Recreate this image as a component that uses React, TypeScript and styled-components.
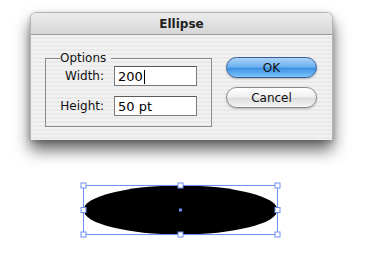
import React from "react";
import styled, { createGlobalStyle } from "styled-components";

const Global = createGlobalStyle`
    html, body {
        margin: 0;
        padding: 0;
        background: #ffffff;
    }
    body {
        font-family: "DejaVu Sans", "Liberation Sans", sans-serif;
        width: 366px;
        height: 276px;
        overflow: hidden;
    }
`;

const Page = styled.div`
    display: flex;
    flex-direction: column;
    padding: 12px 0 0 30px;
`;

const Window = styled.div`
    width: 303px;
    height: 128px;
    display: flex;
    flex-direction: column;
    border-radius: 6px 6px 0 0;
    border: 1px solid #b4b4b4;
    border-bottom: none;
    box-sizing: border-box;
    box-shadow: 0 10px 16px rgba(0, 0, 0, 0.6), 0 2px 5px rgba(0, 0, 0, 0.2);
    overflow: hidden;
`;

const TitleBar = styled.div`
    height: 21px;
    flex: none;
    display: flex;
    align-items: center;
    justify-content: center;
    background: linear-gradient(#ececec, #d6d6d6);
    border-bottom: 1px solid #9a9a9a;
    font-size: 12px;
    font-weight: bold;
    color: #222;
`;

const Body = styled.div`
    flex: 1;
    display: flex;
    gap: 14px;
    padding: 16px 0 0 14px;
    background: repeating-linear-gradient(#f2f2f2 0 2px, #e9e9e9 2px 4px);
`;

const Group = styled.fieldset`
    margin: 0;
    width: 167px;
    height: 76px;
    box-sizing: border-box;
    border: 1px solid #8c8c8c;
    padding: 1px 0 0 14px;
    display: grid;
    grid-template-columns: 44px 83px;
    grid-auto-rows: 20px;
    column-gap: 10px;
    row-gap: 10px;
    align-content: start;
`;

const Legend = styled.legend`
    margin-left: 0;
    padding: 0 5px 0 0;
    font-size: 12px;
    color: #111;
`;

const Label = styled.label`
    font-size: 12px;
    color: #111;
    text-align: right;
    align-self: center;
    white-space: nowrap;
`;

const Field = styled.div`
    box-sizing: border-box;
    border: 1px solid #7a7a7a;
    border-top-color: #5a5a5a;
    background: #fff;
    font-size: 13px;
    color: #000;
    padding: 1px 0 0 3px;
    display: flex;
    align-items: center;
`;

const Caret = styled.span`
    display: inline-block;
    width: 1px;
    height: 14px;
    background: #000;
    margin-left: 1px;
`;

const Buttons = styled.div`
    display: flex;
    flex-direction: column;
    gap: 9px;
    padding-top: 6px;
`;

const Button = styled.div<{ $primary?: boolean }>`
    width: 91px;
    height: 21px;
    box-sizing: border-box;
    border-radius: 11px;
    display: flex;
    align-items: center;
    justify-content: center;
    font-size: 12px;
    color: #111;
    border: 1px solid ${(p) => (p.$primary ? "#3a5f98" : "#8a8a8a")};
    background: ${(p) =>
        p.$primary
            ? "linear-gradient(#a9d3f7 0%, #6fb2ef 45%, #3d92e6 55%, #7cc4fb 100%)"
            : "linear-gradient(#ffffff 0%, #f0f0f0 45%, #dcdcdc 55%, #f6f6f6 100%)"};
    box-shadow: 0 1px 2px rgba(0, 0, 0, 0.25);
`;

const Canvas = styled.div`
    display: flex;
    padding: 42px 0 0 50px;
`;

const blue = "#6f8ff5";

const Handle: React.FC<{ x: number; y: number }> = ({ x, y }) => (
    <rect x={x - 2.5} y={y - 2.5} width={5} height={5} fill="#fff" stroke={blue} strokeWidth={1} />
);

const Selection: React.FC = () => {
    const l = 3.5, r = 197.5, t = 3.5, b = 52.5;
    const cx = (l + r) / 2, cy = (t + b) / 2;
    return (
        <svg width={202} height={57} viewBox="0 0 202 57">
            <ellipse cx={cx} cy={cy} rx={(r - l) / 2} ry={(b - t) / 2} fill="#000" />
            <rect x={l} y={t} width={r - l} height={b - t} fill="none" stroke={blue} strokeWidth={1} />
            {[l, cx, r].map((x) => (
                <React.Fragment key={x}>
                    <Handle x={x} y={t} />
                    <Handle x={x} y={b} />
                </React.Fragment>
            ))}
            <Handle x={l} y={cy} />
            <Handle x={r} y={cy} />
            <rect x={cx - 1.5} y={cy - 1.5} width={3} height={3} fill={blue} />
        </svg>
    );
};

const App: React.FC = () => {
    return (
        <Page>
            <Global />
            <Window>
                <TitleBar>Ellipse</TitleBar>
                <Body>
                    <Group>
                        <Legend>Options</Legend>
                        <Label>Width:</Label>
                        <Field>
                            200<Caret />
                        </Field>
                        <Label>Height:</Label>
                        <Field>50 pt</Field>
                    </Group>
                    <Buttons>
                        <Button $primary>OK</Button>
                        <Button>Cancel</Button>
                    </Buttons>
                </Body>
            </Window>
            <Canvas>
                <Selection />
            </Canvas>
        </Page>
    );
};

export default App;
